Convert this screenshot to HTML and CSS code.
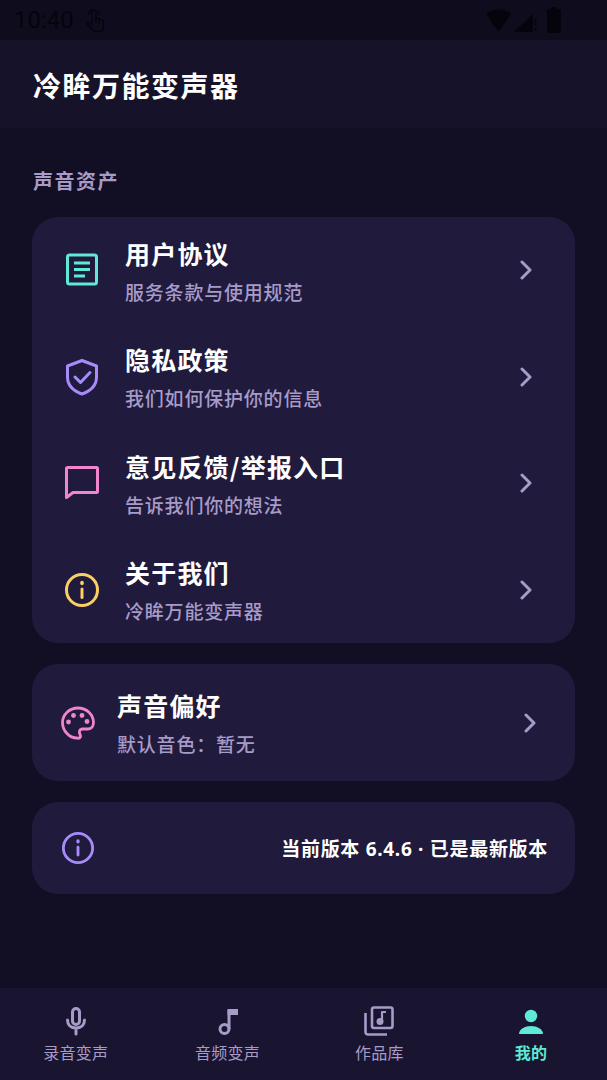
FILE: index.html
```html
<!DOCTYPE html>
<html lang="zh-CN">
<head>
    <meta charset="UTF-8">
    <meta name="viewport" content="width=device-width, initial-scale=1.0">
    <title>冷眸万能变声器</title>
    <link rel="stylesheet" href="styles.css">
</head>
<body>
    <div class="phone">
        <div class="status-bar">
            <span class="status-time">10:40</span>
            <svg class="status-hand" width="20" height="26" viewBox="0 0 20 26" fill="none" stroke="#05040c" stroke-width="1.3" stroke-linecap="round" stroke-linejoin="round">
                <path d="M7 16V5a2 2 0 0 1 4 0v6l5 1.200c1.500.4 2.500 1.500 2.500 3V20c0 2.500-2 4.500-4.500 4.500h-3c-1.800 0-3-.8-4-2.200L2 17c-.8-1.300.9-2.700 2.200-1.700L7 18"/>
                <path d="M4 7a5 5 0 0 1 3-4.700M14 7a5 5 0 0 0-1.500-3.500M11 11v5M14 12v4"/>
            </svg>
            <span class="status-spacer"></span>
            <svg class="status-icons" width="75" height="26" viewBox="0 0 75 26" fill="#05040c">
                <path d="M0 7c6-6 19-6 25 0L12.500 25z"/>
                <path d="M28 25L47 7v18z"/>
                <rect x="49" y="12" width="1.500" height="7"/>
                <rect x="49" y="21" width="1.500" height="3"/>
                <rect x="61" y="2" width="14" height="24" rx="2"/>
                <rect x="65" y="0" width="6" height="3"/>
            </svg>
        </div>

        <header class="app-bar">
            <h1 class="app-title">冷眸万能变声器</h1>
        </header>

        <main class="content">
            <h2 class="section-title">声音资产</h2>

            <section class="card card-list">
                <div class="row">
                    <svg class="row-icon" width="36" height="36" viewBox="0 0 36 36" fill="none" stroke="#5eead4" stroke-width="3" stroke-linejoin="round" stroke-linecap="butt">
                        <rect x="3.500" y="3" width="29" height="29" rx="2"/>
                        <path d="M10 11h16M10 17.500h16M10 24h11"/>
                    </svg>
                    <div class="row-text">
                        <div class="row-title">用户协议</div>
                        <div class="row-sub">服务条款与使用规范</div>
                    </div>
                    <svg class="chevron" width="14" height="20" viewBox="0 0 14 20" fill="none" stroke="#a79bc8" stroke-width="3" stroke-linecap="round" stroke-linejoin="round"><path d="M3 2l8 8-8 8"/></svg>
                </div>
                <div class="row">
                    <svg class="row-icon" width="36" height="38" viewBox="0 0 36 38" fill="none" stroke="#a78bfa" stroke-width="3" stroke-linejoin="round" stroke-linecap="round">
                        <path d="M18 2.500l14.500 5.500v11c0 8-6 14-14.500 17C9.500 33 3.500 27 3.500 19V8z"/>
                        <path d="M11 19l5.500 5.500L26 14.500"/>
                    </svg>
                    <div class="row-text">
                        <div class="row-title">隐私政策</div>
                        <div class="row-sub">我们如何保护你的信息</div>
                    </div>
                    <svg class="chevron" width="14" height="20" viewBox="0 0 14 20" fill="none" stroke="#a79bc8" stroke-width="3" stroke-linecap="round" stroke-linejoin="round"><path d="M3 2l8 8-8 8"/></svg>
                </div>
                <div class="row">
                    <svg class="row-icon" width="36" height="36" viewBox="0 0 36 36" fill="none" stroke="#f084cf" stroke-width="3" stroke-linejoin="round" stroke-linecap="round">
                        <path d="M2.500 3.500a1 1 0 0 1 1-1h29a1 1 0 0 1 1 1v23a1 1 0 0 1-1 1H9l-6.500 5z"/>
                    </svg>
                    <div class="row-text">
                        <div class="row-title">意见反馈/举报入口</div>
                        <div class="row-sub">告诉我们你的想法</div>
                    </div>
                    <svg class="chevron" width="14" height="20" viewBox="0 0 14 20" fill="none" stroke="#a79bc8" stroke-width="3" stroke-linecap="round" stroke-linejoin="round"><path d="M3 2l8 8-8 8"/></svg>
                </div>
                <div class="row">
                    <svg class="row-icon" width="36" height="36" viewBox="0 0 36 36" fill="none" stroke="#fbd063" stroke-width="3" stroke-linecap="round">
                        <circle cx="18" cy="18" r="15.500"/>
                        <path d="M18 17v8.500"/>
                        <path d="M18 10.500v1" stroke-width="3.500"/>
                    </svg>
                    <div class="row-text">
                        <div class="row-title">关于我们</div>
                        <div class="row-sub">冷眸万能变声器</div>
                    </div>
                    <svg class="chevron" width="14" height="20" viewBox="0 0 14 20" fill="none" stroke="#a79bc8" stroke-width="3" stroke-linecap="round" stroke-linejoin="round"><path d="M3 2l8 8-8 8"/></svg>
                </div>
            </section>

            <section class="card card-pref">
                <svg class="pref-icon" width="34" height="34" viewBox="0 0 34 34" fill="none" stroke="#f084cf" stroke-width="2.800" stroke-linejoin="round">
                    <path d="M17 2C8.500 2 1.500 8.500 1.500 16.500S8 32 16 32c3.500 1 4-1.800 3-3.500-1.200-2.500-.5-5.500 2.500-5.500H27c3.500 0 5.500-3 5.500-6.500C32.500 8.500 25.500 2 17 2z"/>
                    <g fill="#f084cf" stroke="none">
                        <circle cx="7.500" cy="16" r="2.400"/>
                        <circle cx="12.500" cy="9.500" r="2.400"/>
                        <circle cx="21" cy="9.500" r="2.400"/>
                        <circle cx="26" cy="15.500" r="2.400"/>
                    </g>
                </svg>
                <div class="row-text">
                    <div class="row-title">声音偏好</div>
                    <div class="row-sub">默认音色：暂无</div>
                </div>
                <svg class="chevron" width="14" height="20" viewBox="0 0 14 20" fill="none" stroke="#a79bc8" stroke-width="3" stroke-linecap="round" stroke-linejoin="round"><path d="M3 2l8 8-8 8"/></svg>
            </section>

            <section class="card card-version">
                <svg width="34" height="34" viewBox="0 0 36 36" fill="none" stroke="#a78bfa" stroke-width="3" stroke-linecap="round">
                    <circle cx="18" cy="18" r="15.500"/>
                    <path d="M18 17v8.500"/>
                    <path d="M18 10.500v1" stroke-width="3.500"/>
                </svg>
                <span class="version-text">当前版本 6.4.6 · 已是最新版本</span>
            </section>
        </main>

        <nav class="tab-bar">
            <div class="tab">
                <svg width="24" height="30" viewBox="0 0 24 30" fill="none" stroke="#a79bc8" stroke-width="3" stroke-linecap="round">
                    <rect x="8.500" y="2.500" width="7" height="16" rx="3.500"/>
                    <path d="M3.500 14c0 5 3.500 8 8.500 8s8.500-3 8.500-8M12 22v6"/>
                </svg>
                <span>录音变声</span>
            </div>
            <div class="tab">
                <svg width="24" height="30" viewBox="0 0 24 30" fill="none" stroke="#a79bc8" stroke-width="3">
                    <circle cx="8.500" cy="23" r="4.500"/>
                    <path d="M13 23V4"/>
                    <path d="M11.500 3h10.500v6h-10.500z" fill="#a79bc8" stroke="none"/>
                </svg>
                <span>音频变声</span>
            </div>
            <div class="tab">
                <svg width="30" height="30" viewBox="0 0 30 30" fill="none" stroke="#a79bc8" stroke-width="2.600" stroke-linejoin="round">
                    <rect x="8" y="1.500" width="20.500" height="20.500" rx="2"/>
                    <path d="M1.500 7v19a2.500 2.500 0 0 0 2.500 2.500h19"/>
                    <circle cx="16" cy="15.500" r="3.500" fill="#a79bc8" stroke="none"/>
                    <path d="M18 15.500V6h4" stroke-width="2.200"/>
                </svg>
                <span>作品库</span>
            </div>
            <div class="tab tab-active">
                <svg width="26" height="30" viewBox="0 0 26 30" fill="#5eead4">
                    <circle cx="13" cy="10" r="6.200"/>
                    <path d="M1 28c0-5 6-8 12-8s12 3 12 8z"/>
                </svg>
                <span>我的</span>
            </div>
        </nav>
    </div>
</body>
</html>
```

FILE: styles.css
```css
* {
    box-sizing: border-box;
}
body {
    margin: 0;
    background-color: #120e24;
    font-family: "Noto Sans CJK SC", "Noto Sans", sans-serif;
    color: #fff;
}
.phone {
    display: flex;
    flex-direction: column;
    height: 1080px;
    overflow: hidden;
}
.status-bar {
    display: flex;
    align-items: center;
    height: 40px;
    padding: 0 46px 0 14px;
    background-color: #0f0c1d;
    color: #05040c;
}
.status-time {
    font-family: Roboto, sans-serif;
    font-size: 24px;
    margin-right: 11px;
}
.status-spacer {
    flex: 1;
}
.app-bar {
    height: 88px;
    padding: 2px 33px 0;
    display: flex;
    align-items: center;
    background-color: #15122a;
}
.app-title {
    margin: 0;
    font-size: 28px;
    font-weight: 700;
    letter-spacing: 1.5px;
}
.content {
    flex: 1;
    padding: 39px 32px 0;
}
.section-title {
    margin: 0 0 22px;
    padding-left: 1px;
    height: 28px;
    line-height: 28px;
    font-size: 20px;
    font-weight: 700;
    letter-spacing: 1.5px;
    color: #a79bc8;
}
.card {
    background-color: #201a3c;
    border-radius: 26px;
}
.card-list {
    height: 426px;
    display: flex;
    flex-direction: column;
    margin-bottom: 21px;
}
.row {
    flex: 1;
    display: flex;
    align-items: center;
    padding: 0 42px 0 32px;
}
.row-icon {
    margin-right: 25px;
    flex: none;
}
.row-text {
    flex: 1;
}
.row-title {
    font-size: 25px;
    line-height: 36px;
    font-weight: 700;
    letter-spacing: 1.2px;
}
.row-sub {
    margin-top: 7px;
    font-size: 19px;
    line-height: 28px;
    font-weight: 500;
    letter-spacing: 0.8px;
    color: #a79bc8;
}
.card-pref {
    height: 117px;
    display: flex;
    align-items: center;
    padding: 0 38px 0 29px;
    margin-bottom: 21px;
}
.pref-icon {
    margin-right: 22px;
    flex: none;
}
.card-version {
    height: 92px;
    display: flex;
    align-items: center;
    justify-content: space-between;
    padding: 0 27px 0 29px;
}
.version-text {
    font-family: "Noto Sans", "Noto Sans CJK SC", sans-serif;
    font-size: 19px;
    font-weight: 700;
    letter-spacing: 0.7px;
}
.tab-bar {
    height: 92px;
    display: flex;
    background-color: #191430;
    padding-top: 18px;
}
.tab {
    flex: 1;
    display: flex;
    flex-direction: column;
    align-items: center;
    font-size: 16px;
    line-height: 24px;
    letter-spacing: 0.25px;
    color: #a79bc8;
}
.tab svg {
    margin-bottom: 4px;
}
.tab-active {
    color: #5eead4;
    font-weight: 700;
}
```
